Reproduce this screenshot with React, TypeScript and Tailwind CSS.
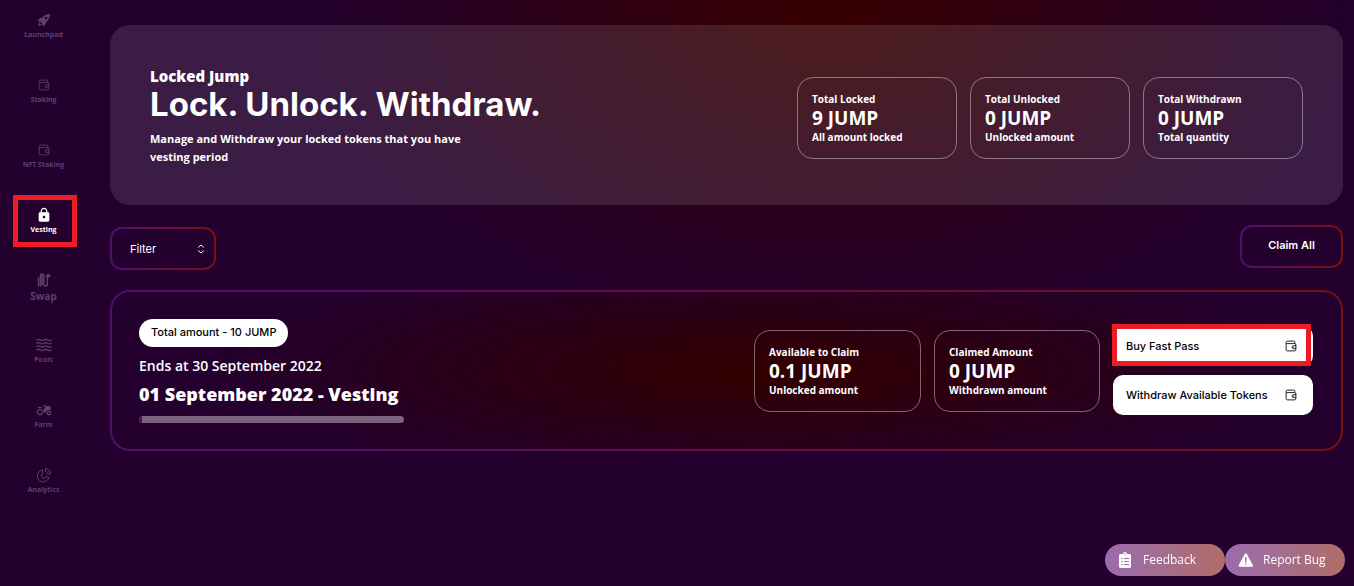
import { ReactNode } from "react";
import { IoRocketSharp, IoWarning } from "react-icons/io5";
import { MdLock, MdAgriculture } from "react-icons/md";
import { FaClipboardList } from "react-icons/fa";

const WalletIcon = ({ className }: { className?: string }) => (
    <svg viewBox="0 0 14 14" fill="none" stroke="currentColor" strokeLinejoin="round" strokeLinecap="round" className={className} aria-hidden="true">
        <path d="M2 4.200h9.300c.8 0 1.400.6 1.400 1.400v5.700c0 .8-.6 1.400-1.400 1.400H2.800c-.9 0-1.500-.6-1.500-1.500V2.900c0-.9.6-1.600 1.500-1.600h7.500c.7 0 1.200.5 1.200 1.200v1.600" />
        <path d="M12.500 6.700H10a1.700 1.700 0 0 0 0 3.400h2.500M10 8.400h.2" />
    </svg>
);

const SwapIcon = ({ className }: { className?: string }) => (
    <svg viewBox="0 0 16 16" fill="none" stroke="currentColor" strokeWidth="1.5" className={className} aria-hidden="true">
        <path d="M2.500 14.500V5M4.500 14.500V3.500c0-1 .6-1.700 1.500-1.700s1.700.7 1.700 1.700V12c0 1.300.7 2 1.800 2s1.900-.7 1.900-2V2" />
        <path d="M6 3v10M9.700 4h4.800M12.500 1.500v4" />
    </svg>
);

const PoolsIcon = ({ className }: { className?: string }) => (
    <svg viewBox="0 0 16 14" fill="none" stroke="currentColor" strokeWidth="1.3" strokeLinecap="round" className={className} aria-hidden="true">
        {[2, 5.3, 8.6, 11.9].map((y) => (
            <path key={y} d={`M1 ${y}c1.200-.9 2.300-.9 3.500 0s2.300.9 3.500 0 2.300-.9 3.500 0 2.300.9 3.500 0`} />
        ))}
    </svg>
);

const AnalyticsIcon = ({ className }: { className?: string }) => (
    <svg viewBox="0 0 16 16" fill="none" stroke="currentColor" strokeLinejoin="round" className={className} aria-hidden="true">
        <path d="M6.500 3A5.900 5.900 0 1 0 13 10.200L10 9.800A2.500 2.500 0 1 1 6.900 6.300z" />
        <path d="M9.500 1.500A5.400 5.400 0 0 1 14.500 6.800L11.600 6.900A2.800 2.800 0 0 0 9.500 4.500z" />
    </svg>
);

const SortIcon = ({ className }: { className?: string }) => (
    <svg viewBox="0 0 8 10" fill="none" stroke="currentColor" strokeLinecap="round" strokeLinejoin="round" className={className} aria-hidden="true">
        <path d="M1.500 3.200 4 1l2.500 2.200M1.500 6.800 4 9l2.500-2.200" />
    </svg>
);

const navItems: { label: string, icon: ReactNode, active?: boolean, size?: string }[] = [
    { label: "Launchpad", icon: <IoRocketSharp className="size-3.5" /> },
    { label: "Staking", icon: <WalletIcon className="size-3" /> },
    { label: "NFT Staking", icon: <WalletIcon className="size-3" /> },
    { label: "Vesting", icon: <MdLock className="size-4" />, active: true },
    { label: "Swap", icon: <SwapIcon className="size-4" />, size: "text-[10px] leading-4" },
    { label: "Pools", icon: <PoolsIcon className="size-4" /> },
    { label: "Farm", icon: <MdAgriculture className="size-4" /> },
    { label: "Analytics", icon: <AnalyticsIcon className="size-4" /> },
];

const totals = [
    { title: "Total Locked", value: "9 JUMP", note: "All amount locked" },
    { title: "Total Unlocked", value: "0 JUMP", note: "Unlocked amount" },
    { title: "Total Withdrawn", value: "0 JUMP", note: "Total quantity" },
];

export default function App() {
    return (
        <div className="flex min-h-screen bg-[#23002d] bg-[radial-gradient(ellipse_520px_340px_at_830px_0px,#380000,#23002d)] bg-no-repeat font-['Open_Sans',sans-serif] text-white">
            <Sidebar />
            <main className="flex min-w-0 flex-1 flex-col pt-[25px] pr-[11px] pb-[135px]">
                <Hero />
                <div className="mt-5 flex items-start justify-between">
                    <div className="relative mt-0.5">
                        <select aria-label="Filter" className="block h-[43px] w-[106px] appearance-none rounded-xl border-2 border-transparent pt-0.5 pl-[18px] font-['Inter',sans-serif] text-[11px] outline-none [background:linear-gradient(#23002d,#23002d)_padding-box,linear-gradient(90deg,#4e0f70,#7a1010)_border-box]">
                            <option>Filter</option>
                        </select>
                        <SortIcon className="pointer-events-none absolute top-[17px] right-[11px] h-2.5 w-2" />
                    </div>
                    <button className="h-[43px] w-[103px] rounded-xl border-2 border-transparent pb-0.5 font-['Inter',sans-serif] text-[11px] font-semibold [background:linear-gradient(#23002d,#23002d)_padding-box,linear-gradient(90deg,#4e0f70,#7a1010)_border-box]">
                        Claim All
                    </button>
                </div>
                <VestingCard />
            </main>
            <div className="fixed right-[9px] bottom-2.5 flex">
                <FloatingButton icon={<FaClipboardList className="size-4" />}>Feedback</FloatingButton>
                <FloatingButton icon={<IoWarning className="size-[18px]" />}>Report Bug</FloatingButton>
            </div>
        </div>
    );
}

const Sidebar = () => (
    <nav className="w-[110px] shrink-0 pt-3">
        <ul className="flex w-[87px] flex-col">
            {navItems.map((item) => (
                <li key={item.label} className="relative h-[65px]">
                    <a href="#" className={`flex flex-col items-center font-bold ${item.size ?? "text-[7px] leading-[13px]"} ${item.active ? "text-white" : "text-[#5f3f6b]"}`}>
                        <span className="flex h-4 items-center">{item.icon}</span>
                        {item.label}
                    </a>
                    {item.active && <span className="absolute -top-3 left-[13px] h-[52px] w-16 border-5 border-[#ed1c24]" />}
                </li>
            ))}
        </ul>
    </nav>
);

const Hero = () => (
    <section className="flex h-[180px] items-center justify-between rounded-[20px] bg-white/11 px-10 pt-1.5">
        <div className="pb-1">
            <p className="text-[15px] leading-5 font-extrabold">Locked Jump</p>
            <h1 className="font-['Inter',sans-serif] text-[33px] leading-9 font-bold">Lock. Unlock. Withdraw.</h1>
            <p className="mt-2 w-[320px] text-[11px] leading-[18px] font-bold">
                Manage and Withdraw your locked tokens that you have vesting period
            </p>
        </div>
        <div className="flex gap-[13px]">
            {totals.map((total) => <StatCard key={total.title} {...total} className="w-40" />)}
        </div>
    </section>
);

const StatCard = ({ title, value, note, className }: { title: string, value: string, note: string, className: string }) => (
    <div className={`flex h-[82px] flex-col justify-center rounded-2xl border border-white/40 pl-3.5 ${className}`}>
        <p className="text-[10px] leading-4 font-bold">{title}</p>
        <p className="text-[19px] leading-[22px] font-bold">{value}</p>
        <p className="text-[10px] leading-4 font-bold">{note}</p>
    </div>
);

const VestingCard = () => (
    <section className="mt-5 flex h-[161px] items-center justify-between rounded-[20px] border-2 border-transparent pr-7 pl-[27px] [background:radial-gradient(ellipse_45%_75%_at_53%_50%,#330000,#23002d)_padding-box,linear-gradient(90deg,#4e0f70,#660a48_50%,#7a1010)_border-box]">
        <div>
            <span className="inline-flex h-7 items-center rounded-full bg-white px-3 font-['Inter',sans-serif] text-[11px] font-medium text-black">
                Total amount - 10 JUMP
            </span>
            <p className="mt-[7px] text-sm leading-6 font-semibold">Ends at 30 September 2022</p>
            <h2 className="mt-1 text-lg leading-6 font-extrabold">01 September 2022 - Vesting</h2>
            <div className="mt-2.5 h-[7px] w-[265px] overflow-hidden rounded-full bg-[#7b627f]">
                <div className="h-full w-[3px] bg-[#5c0f3c]" />
            </div>
        </div>
        <div className="flex items-center gap-[13px]">
            <StatCard title="Available to Claim" value="0.1 JUMP" note="Unlocked amount" className="w-[167px]" />
            <StatCard title="Claimed Amount" value="0 JUMP" note="Withdrawn amount" className="w-[166px]" />
            <div className="flex flex-col gap-[9px]">
                <div className="relative">
                    <ActionButton>Buy Fast Pass</ActionButton>
                    <span className="pointer-events-none absolute -top-0.5 -left-px h-[42px] w-[199px] border-5 border-[#ed1c24]" />
                </div>
                <ActionButton>Withdraw Available Tokens</ActionButton>
            </div>
        </div>
    </section>
);

const ActionButton = ({ children }: { children: ReactNode }) => (
    <button className="flex h-10 w-[200px] items-center justify-between rounded-[10px] bg-white pr-4 pl-[13px] font-['Inter',sans-serif] text-[11px] font-medium text-black">
        {children}
        <WalletIcon className="size-3" />
    </button>
);

const FloatingButton = ({ icon, children }: { icon: ReactNode, children: ReactNode }) => (
    <button className="flex h-8 w-[120px] items-center rounded-full bg-linear-to-r from-[#9a6cae] to-[#b06c68] pl-3 text-xs font-medium">
        <span className="flex w-[26px]">{icon}</span>
        {children}
    </button>
);
